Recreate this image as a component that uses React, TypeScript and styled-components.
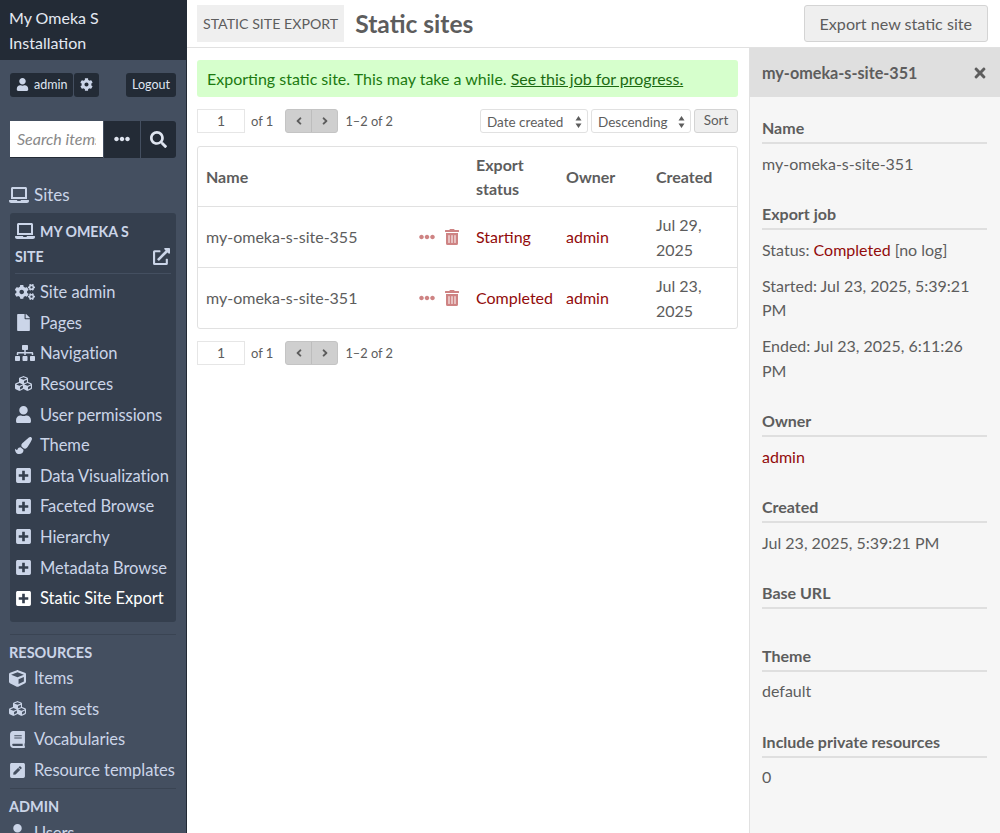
import React from 'react';
import styled, { createGlobalStyle } from 'styled-components';
import {
  FaUser, FaCog, FaSearch, FaEllipsisH, FaLaptop, FaExternalLinkAlt, FaCogs, FaFile, FaSitemap,
  FaCubes, FaPaintBrush, FaPlusSquare, FaCube, FaBook, FaPenSquare, FaTrashAlt, FaTimes, FaAngleLeft, FaAngleRight,
} from 'react-icons/fa';

const Global = createGlobalStyle`
  html, body { margin: 0; padding: 0; height: 100%; overflow: hidden; background: #fff; }
  body { font-family: Lato, "Open Sans", sans-serif; font-size: 16px; line-height: 24px; color: #5d5d5d; }
  * { box-sizing: border-box; }
  a { color: #920b0b; text-decoration: none; }
`;

const Page = styled.div`display: flex; width: 1000px; height: 833px; overflow: hidden;`;
const Sidebar = styled.aside`
  width: 187px; flex: none; height: 833px; overflow: hidden; background: #444f60;
  border-right: 1px solid #222a35; color: #cbd5e8;
`;
const Brand = styled.div`
  background: #232b36; color: #e4e9f2; height: 60px; padding: 6px 9px; font-size: 16px; line-height: 24.5px;
`;
const UserBar = styled.div`display: flex; justify-content: space-between; padding: 12.5px 10px 0 10px; height: 61px;`;
const UserGroup = styled.div`display: flex; gap: 1px; height: 24px;`;
const DarkChip = styled.div`
  background: #232b36; color: #dfe5f0; height: 24px; font-size: 12.5px; line-height: 24px; display: flex;
  align-items: center; gap: 5px; padding: 0 6px; border-radius: 3px;
  svg { font-size: 13px; color: #cbd5e8; flex: none; }
`;
const SearchRow = styled.div`display: flex; height: 36.5px; margin: 0 10px; gap: 1px;`;
const SearchInput = styled.input`
  width: 93px; flex: none; background: #fff; font-family: inherit; font-size: 16px; padding: 0 7px;
  border: none; border-bottom: 1px solid #232b36; outline: none; border-radius: 0;
  &::placeholder { color: #888; font-style: italic; opacity: 1; }
`;
const SearchBtn = styled.div`
  flex: 1; background: #232b36; color: #dfe5f0; display: flex; align-items: center; justify-content: center;
  border-radius: 0 3px 3px 0; svg { font-size: 17px; }
`;
const SearchMore = styled(SearchBtn)`border-radius: 0; svg { font-size: 16px; }`;
const TopLink = styled.div`
  display: flex; align-items: center; gap: 5px; padding-left: 9px; margin-top: 22px; height: 30px; font-size: 17px;
  svg { font-size: 20px; }
`;
const SiteBox = styled.div`
  margin: 3px 10px 0; background: #353f4e; border-radius: 3px; padding: 6px 5px 9px; height: 409px;
`;
const SiteTitle = styled.div`
  font-weight: 700; font-size: 14.2px; line-height: 25px; color: #cbd5e8; position: relative;
  padding: 0 30px 4px 0; border-bottom: 1px solid #444f60; margin-bottom: 3.4px; text-transform: uppercase;
  svg.laptop { font-size: 20px; vertical-align: -4px; margin-right: 5px; }
`;
const ExternalIcon = styled.span`position: absolute; right: 1px; bottom: 8px; line-height: 17px; svg { font-size: 17px; display: block; }`;
const NavItem = styled.div<{ $active?: boolean }>`
  display: flex; align-items: center; height: 30.6px; font-size: 16.5px; white-space: nowrap;
  color: ${p => (p.$active ? '#fff' : '#cbd5e8')};
  font-weight: 400; letter-spacing: -0.05px;
`;
const IconSlot = styled.span<{ $wide?: boolean }>`
  width: 25px; flex: none; display: flex; align-items: center;
  svg { font-size: ${p => (p.$wide ? 20 : 17)}px; flex: none; }
`;
const Divider = styled.div<{ $top: number }>`height: 1px; background: #3a4453; margin: ${p => p.$top}px 10px 0;`;
const Section = styled.div`
  padding-left: 9px; font-weight: 700; font-size: 14.5px; line-height: 20px; color: #cbd5e8; margin-top: 8px; text-transform: uppercase;
`;
const SectionList = styled.div`padding-left: 9px;`;

const Main = styled.div`flex: 1; min-width: 0; display: flex; flex-direction: column;`;
const Header = styled.header`
  height: 48px; flex: none; border-bottom: 1px solid #e1e1e1; display: flex; align-items: flex-start;
  padding: 5px 12px 0 10px;
`;
const Tag = styled.div`
  background: #efefef; height: 37px; line-height: 37px; font-size: 14.2px; padding: 0 6px; color: #5d5d5d;
`;
const Title = styled.h1`
  margin: 0 0 0 11px; font-size: 24.6px; line-height: 37px; font-weight: 700; color: #5d5d5d; flex: 1;
`;
const PrimaryBtn = styled.div`
  background: #efefef; border: 1px solid #d4d4d4; border-radius: 3px; height: 37px; line-height: 35px;
  font-size: 16.1px; padding: 0 15px; color: #5d5d5d;
`;
const Body = styled.div`flex: 1; display: flex; min-height: 0;`;
const Content = styled.div`width: 562px; flex: none; padding: 12px 11px 0 10px;`;
const Message = styled.div`
  background: #d6ffcc; color: #1c7a10; height: 37px; line-height: 37px; padding: 0 10px; border-radius: 3px; font-size: 16px;
  a { color: #1c6b12; text-decoration: underline; }
`;
const Controls = styled.div`display: flex; align-items: center; height: 24px; font-size: 13px; margin-top: 12px;`;
const BottomControls = styled.div`margin-top: 1px;`;
const PageInput = styled.div`
  width: 48px; height: 24px; border: 1px solid #e6e6e6; text-align: center; line-height: 22px; font-size: 14px; margin-right: 6px;
`;
const OfText = styled.span`margin-right: 12px;`;
const RangeText = styled.span`font-size: 12.8px;`;
const Pager = styled.div`
  display: flex; height: 24px; width: 53px; background: #cfcfcf; border: 1px solid #c4c4c4; border-radius: 3px; margin-right: 7px;
`;
const PagerBtn = styled.span`
  flex: 1; display: flex; align-items: center; justify-content: center; color: #5d5d5d;
  & + & { border-left: 1px solid #bdbdbd; }
  svg { font-size: 12px; }
`;
const Spacer = styled.div`flex: 1;`;
const SelectBox = styled.div<{ $w: number }>`
  position: relative; width: ${p => p.$w}px; height: 24px; border: 1px solid #e1e1e1; border-radius: 3px; line-height: 24px;
  font-size: 13.5px; padding-left: 6px; margin-right: 3px;
`;
const Updown = styled.svg`position: absolute; right: 5px; top: 5px;`;
const SortBtn = styled.div`
  width: 44px; height: 24px; background: #efefef; border: 1px solid #d4d4d4; border-radius: 3px; text-align: center; line-height: 21px; font-size: 13.5px;
`;
const Table = styled.div`
  margin-top: 13px; border: 1px solid #e1e1e1; border-radius: 3px; display: grid;
  grid-template-columns: 209px 61px 90px 90px 1fr;
`;
const Cell = styled.div<{ $head?: boolean; $last?: boolean }>`
  height: ${p => (p.$head ? 60 : p.$last ? 60 : 61)}px; display: flex; align-items: center; padding: 1px 0 0 8px; line-height: 24.5px;
  border-bottom: ${p => (p.$last ? 'none' : '1px solid #e1e1e1')};
  font-weight: ${p => (p.$head ? 700 : 400)};
  color: #5d5d5d;
`;
const Actions = styled(Cell)`
  padding: 0 0 0 12px; gap: 9px; color: #ce8383;
`;
const StatusLink = styled.a``;
const Panel = styled.aside`
  flex: 1; background: #f6f6f6; border-left: 1px solid #e1e1e1; min-width: 0; overflow: hidden;
`;
const PanelHead = styled.div`
  background: #dfdfdf; height: 49px; display: flex; align-items: center; justify-content: space-between;
  padding: 0 12px; font-weight: 700; color: #5d5d5d; font-size: 16.2px;
  svg { font-size: 16px; }
`;
const PanelBody = styled.div`padding: 19px 13px 0 12px;`;
const PanelLabel = styled.div`
  font-weight: 700; line-height: 24px; height: 28px; border-bottom: 2px solid #dfdfdf; margin-bottom: 7.5px;
`;
const PanelValue = styled.div`line-height: 24.5px; margin-bottom: 11.5px;`;
const PanelEmpty = styled.div`height: 1px;`;
const PanelGroup = styled.div`margin-bottom: 26px;`;

const UpDownIcon = () => (
  <Updown width="7" height="14" viewBox="0 0 7 14">
    <path d="M3.5 1 L6.5 5.5 H0.5 Z M3.5 13 L0.5 8.5 H6.5 Z" fill="#5d5d5d" />
  </Updown>
);

const PagerRow = ({ withSort }: { withSort?: boolean }) => (
  <Controls>
    <PageInput>1</PageInput>
    <OfText>of 1</OfText>
    <Pager>
      <PagerBtn><FaAngleLeft /></PagerBtn>
      <PagerBtn><FaAngleRight /></PagerBtn>
    </Pager>
    <RangeText>1–2 of 2</RangeText>
    <Spacer />
    {withSort && (
      <>
        <SelectBox $w={108}>Date created<UpDownIcon /></SelectBox>
        <SelectBox $w={100}>Descending<UpDownIcon /></SelectBox>
        <SortBtn>Sort</SortBtn>
      </>
    )}
  </Controls>
);

const siteNav: [React.ReactNode, string, boolean, boolean][] = [
  [<FaCogs />, 'Site admin', true, false],
  [<FaFile />, 'Pages', false, false],
  [<FaSitemap />, 'Navigation', true, false],
  [<FaCubes />, 'Resources', false, false],
  [<FaUser />, 'User permissions', false, false],
  [<FaPaintBrush />, 'Theme', false, false],
  [<FaPlusSquare />, 'Data Visualization', false, false],
  [<FaPlusSquare />, 'Faceted Browse', false, false],
  [<FaPlusSquare />, 'Hierarchy', false, false],
  [<FaPlusSquare />, 'Metadata Browse', false, false],
  [<FaPlusSquare />, 'Static Site Export', false, true],
];

const resources: [React.ReactNode, string][] = [
  [<FaCube />, 'Items'],
  [<FaCubes />, 'Item sets'],
  [<FaBook />, 'Vocabularies'],
  [<FaPenSquare />, 'Resource templates'],
];

const rows = [
  { name: 'my-omeka-s-site-355', status: 'Starting', date: 'Jul 29, 2025' },
  { name: 'my-omeka-s-site-351', status: 'Completed', date: 'Jul 23, 2025' },
];

export default function App() {
  return (
    <Page>
      <Global />
      <Sidebar>
        <Brand>My Omeka S Installation</Brand>
        <UserBar>
          <UserGroup>
            <DarkChip><FaUser />admin</DarkChip>
            <DarkChip><FaCog /></DarkChip>
          </UserGroup>
          <DarkChip>Logout</DarkChip>
        </UserBar>
        <SearchRow>
          <SearchInput placeholder="Search items" readOnly />
          <SearchMore><FaEllipsisH /></SearchMore>
          <SearchBtn><FaSearch /></SearchBtn>
        </SearchRow>
        <TopLink><FaLaptop />Sites</TopLink>
        <SiteBox>
          <SiteTitle>
            <FaLaptop className="laptop" />My Omeka S Site
            <ExternalIcon><FaExternalLinkAlt /></ExternalIcon>
          </SiteTitle>
          {siteNav.map(([icon, label, wide, active]) => (
            <NavItem key={label} $active={active}>
              <IconSlot $wide={wide}>{icon}</IconSlot>{label}
            </NavItem>
          ))}
        </SiteBox>
        <Divider $top={12.5} />
        <Section>Resources</Section>
        <SectionList>
          {resources.map(([icon, label]) => (
            <NavItem key={label}><IconSlot>{icon}</IconSlot>{label}</NavItem>
          ))}
        </SectionList>
        <Divider $top={3} />
        <Section>Admin</Section>
        <SectionList>
          <NavItem><IconSlot><FaUser /></IconSlot>Users</NavItem>
        </SectionList>
      </Sidebar>
      <Main>
        <Header>
          <Tag>STATIC SITE EXPORT</Tag>
          <Title>Static sites</Title>
          <PrimaryBtn>Export new static site</PrimaryBtn>
        </Header>
        <Body>
          <Content>
            <Message>Exporting static site. This may take a while. <a href="#">See this job for progress.</a></Message>
            <PagerRow withSort />
            <Table>
              <Cell $head>Name</Cell>
              <Cell $head />
              <Cell $head>Export status</Cell>
              <Cell $head>Owner</Cell>
              <Cell $head>Created</Cell>
              {rows.map((r, i) => (
                <React.Fragment key={r.name}>
                  <Cell $last={i === 1}>{r.name}</Cell>
                  <Actions $last={i === 1}><FaEllipsisH size={16} /><FaTrashAlt size={16} /></Actions>
                  <Cell $last={i === 1}><StatusLink href="#">{r.status}</StatusLink></Cell>
                  <Cell $last={i === 1}><a href="#">admin</a></Cell>
                  <Cell $last={i === 1}>{r.date}</Cell>
                </React.Fragment>
              ))}
            </Table>
            <BottomControls><PagerRow /></BottomControls>
          </Content>
          <Panel>
            <PanelHead>my-omeka-s-site-351<FaTimes /></PanelHead>
            <PanelBody>
              <PanelGroup>
                <PanelLabel>Name</PanelLabel>
                <PanelValue>my-omeka-s-site-351</PanelValue>
              </PanelGroup>
              <PanelGroup>
                <PanelLabel>Export job</PanelLabel>
                <PanelValue>Status: <a href="#">Completed</a> [no log]</PanelValue>
                <PanelValue>Started: Jul 23, 2025, 5:39:21 PM</PanelValue>
                <PanelValue>Ended: Jul 23, 2025, 6:11:26 PM</PanelValue>
              </PanelGroup>
              <PanelGroup>
                <PanelLabel>Owner</PanelLabel>
                <PanelValue><a href="#">admin</a></PanelValue>
              </PanelGroup>
              <PanelGroup>
                <PanelLabel>Created</PanelLabel>
                <PanelValue>Jul 23, 2025, 5:39:21 PM</PanelValue>
              </PanelGroup>
              <PanelGroup>
                <PanelLabel>Base URL</PanelLabel>
                <PanelEmpty />
              </PanelGroup>
              <PanelGroup>
                <PanelLabel>Theme</PanelLabel>
                <PanelValue>default</PanelValue>
              </PanelGroup>
              <PanelGroup>
                <PanelLabel>Include private resources</PanelLabel>
                <PanelValue>0</PanelValue>
              </PanelGroup>
            </PanelBody>
          </Panel>
        </Body>
      </Main>
    </Page>
  );
}
